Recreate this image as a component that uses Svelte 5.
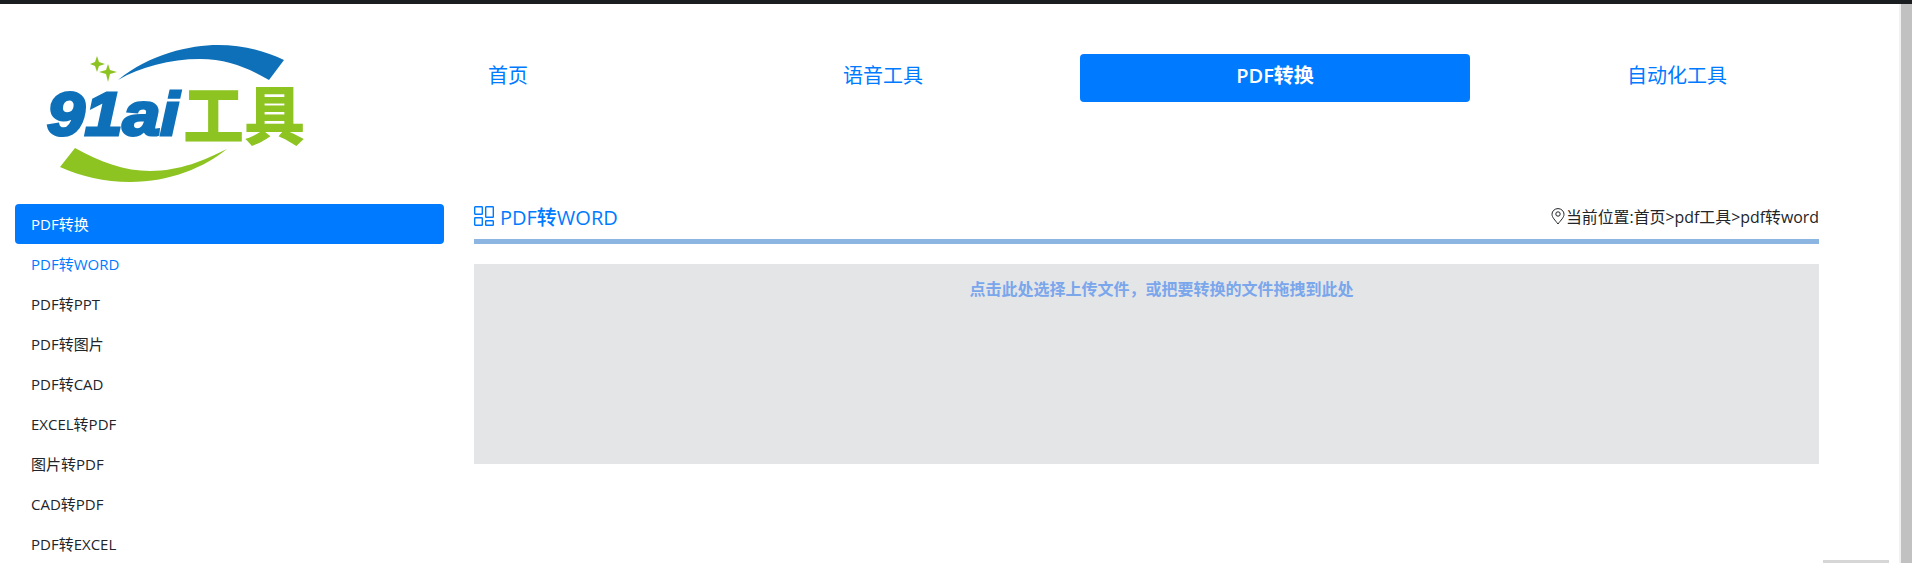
<script>
  const navItems = [
    { label: '首页', active: false },
    { label: '语音工具', active: false },
    { label: 'PDF转换', active: true },
    { label: '自动化工具', active: false }
  ];
  const menu = ['PDF转WORD', 'PDF转PPT', 'PDF转图片', 'PDF转CAD', 'EXCEL转PDF', '图片转PDF', 'CAD转PDF', 'PDF转EXCEL'];
</script>

<div class="page">
  <header class="header">
    <div class="logo">
      <svg width="330" height="196" viewBox="0 0 330 196" aria-label="91ai工具">
        <path class="blue" d="M118 76 C150 50 190 41 218 41 C243 41 265 47 284 56 L269 76 C250 65 228 55 200 55 C170 55 140 63 118 76 Z" />
        <path class="green" d="M75 144 C100 158 125 167 150 167 C180 167 205 156 227 145 C205 163 170 178 130 178 C105 178 80 172 60 163 Z" />
        <path class="green" d="M97 52 L99 58 L105 60 L99 62 L97 68 L95 62 L90 60 L95 58 Z" />
        <path class="green" d="M108 60 L110 66 L117 68 L110 70 L108 78 L106 70 L99 68 L106 66 Z" />
        <text class="l91" x="47" y="131" textLength="132" lengthAdjust="spacingAndGlyphs">91ai</text>
        <text class="lcn" x="183" y="135" textLength="122" lengthAdjust="spacingAndGlyphs">工具</text>
      </svg>
    </div>
    <nav class="nav">
      {#each navItems as item}
        <a class="nav-item" class:active={item.active} href="#top">{item.label}</a>
      {/each}
    </nav>
  </header>

  <div class="body">
    <aside class="sidebar">
      <div class="side-head">PDF转换</div>
      {#each menu as m, i}
        <div class="side-item" class:current={i === 0}>{m}</div>
      {/each}
    </aside>

    <main class="content">
      <div class="title-row">
        <h2 class="title">
          <svg class="grid-icon" width="20" height="20" viewBox="0 0 20 20">
            <rect x="0.7" y="0.7" width="7.6" height="7.6" rx="0.6" />
            <rect x="0.7" y="11.7" width="7.6" height="7.6" rx="0.6" />
            <rect x="11.7" y="0.7" width="7.6" height="10.6" rx="0.6" />
            <rect x="11.7" y="14.7" width="7.6" height="4.6" rx="0.6" />
          </svg>
          PDF转WORD
        </h2>
        <div class="crumb">
          <svg width="14" height="17" viewBox="0 0 14 17">
            <path class="pin" d="M7 16 C4 12 1 9.5 1 6.2 A6 5.6 0 0 1 13 6.2 C13 9.5 10 12 7 16 Z" />
            <circle class="pin" cx="7" cy="6" r="2.2" />
          </svg>
          <span>当前位置:首页&gt;pdf工具&gt;pdf转word</span>
        </div>
      </div>
      <div class="drop">点击此处选择上传文件，或把要转换的文件拖拽到此处</div>
    </main>
  </div>

  <div class="vbar"></div>
  <div class="hbar"></div>
</div>

<style>
  :global(body) {
    margin: 0;
    background: #fff;
    overflow: hidden;
  }
  .page {
    height: 563px;
    overflow: hidden;
    border-top: 4px solid #1b1e21;
    box-sizing: border-box;
    font-family: "Open Sans", "Noto Sans CJK SC", sans-serif;
    color: #212529;
  }
  .header {
    display: flex;
    height: 200px;
  }
  .logo {
    width: 330px;
    flex: none;
  }
  .logo svg {
    display: block;
  }
  .blue { fill: #0e70b9; }
  .green { fill: #8dc421; }
  .l91 {
    font-family: "Liberation Sans", sans-serif;
    font-weight: 700;
    font-style: italic;
    font-size: 62px;
    fill: #0e70b9;
    stroke: #0e70b9;
    stroke-width: 3px;
  }
  .lcn {
    font-family: "Noto Sans CJK SC", sans-serif;
    font-weight: 900;
    font-size: 64px;
    fill: #8dc421;
  }
  .nav {
    display: grid;
    grid-template-columns: 356px 394px 390px 414px;
    height: 48px;
    margin-top: 50px;
  }
  .nav-item {
    display: flex;
    align-items: center;
    justify-content: center;
    font-size: 20px;
    color: #007bff;
    text-decoration: none;
    padding-bottom: 7px;
    box-sizing: border-box;
    border-radius: 4px;
  }
  .nav-item.active {
    background: #007bff;
    color: #fff;
    font-weight: 600;
  }
  .body {
    display: flex;
    padding-left: 15px;
    gap: 30px;
  }
  .sidebar {
    width: 429px;
    flex: none;
    font-size: 15px;
  }
  .side-head,
  .side-item {
    height: 40px;
    line-height: 40px;
    padding-left: 16px;
  }
  .side-head {
    background: #007bff;
    color: #fff;
    border-radius: 4px;
  }
  .side-item.current {
    color: #007bff;
  }
  .content {
    width: 1345px;
    flex: none;
  }
  .title-row {
    display: flex;
    justify-content: space-between;
    align-items: center;
    height: 40px;
    border-bottom: 5px solid #8db5e2;
    box-sizing: border-box;
    padding-bottom: 11px;
  }
  .title {
    display: flex;
    align-items: center;
    gap: 6px;
    margin: 0;
    font-size: 20px;
    font-weight: 500;
    color: #007bff;
  }
  .grid-icon rect {
    fill: none;
    stroke: #007bff;
    stroke-width: 1.4;
  }
  .crumb {
    display: flex;
    align-items: center;
    gap: 1px;
    font-size: 15.9px;
    white-space: nowrap;
  }
  .pin {
    fill: none;
    stroke: #212529;
    stroke-width: 1;
  }
  .drop {
    margin-top: 20px;
    height: 200px;
    box-sizing: border-box;
    background: #e4e5e7;
    padding: 13px 0 0 30px;
    text-align: center;
    font-size: 16px;
    font-weight: 700;
    line-height: 24px;
    color: #7aa6ec;
  }
  .vbar {
    position: fixed;
    top: 4px;
    right: 0;
    bottom: 0;
    width: 11px;
    background: #c1c1c1;
    border-left: 2px solid #f1f1f1;
  }
  .hbar {
    position: fixed;
    left: 1823px;
    bottom: 0;
    width: 66px;
    height: 3px;
    background: #d6d6d6;
  }
</style>
